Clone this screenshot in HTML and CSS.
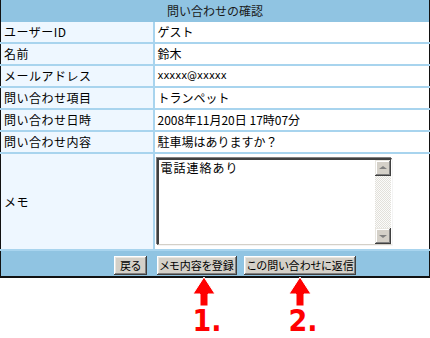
FILE: index.html
```html
<!DOCTYPE html>
<html lang="ja">
<head>
    <meta charset="UTF-8">
    <title>問い合わせの確認</title>
    <link rel="stylesheet" href="styles.css">
</head>
<body>
    <div class="page">
        <table class="confirm">
            <colgroup>
                <col class="col-label">
                <col class="col-value">
            </colgroup>
            <tr>
                <th colspan="2" class="title">問い合わせの確認</th>
            </tr>
            <tr>
                <td class="label">ユーザーID</td>
                <td class="value">ゲスト</td>
            </tr>
            <tr>
                <td class="label">名前</td>
                <td class="value">鈴木</td>
            </tr>
            <tr>
                <td class="label">メールアドレス</td>
                <td class="value mail">xxxxx@xxxxx</td>
            </tr>
            <tr>
                <td class="label">問い合わせ項目</td>
                <td class="value">トランペット</td>
            </tr>
            <tr>
                <td class="label">問い合わせ日時</td>
                <td class="value">2008年11月20日 17時07分</td>
            </tr>
            <tr>
                <td class="label">問い合わせ内容</td>
                <td class="value">駐車場はありますか？</td>
            </tr>
            <tr class="memo-row">
                <td class="label">メモ</td>
                <td class="value">
                    <div class="memo">
                        <textarea class="memo-text">電話連絡あり</textarea>
                        <div class="scrollbar">
                            <span class="scroll-btn up"></span>
                            <span class="scroll-track"></span>
                            <span class="scroll-btn down"></span>
                        </div>
                    </div>
                </td>
            </tr>
            <tr>
                <td colspan="2" class="actions">
                    <button type="button" class="btn back">戻る</button>
                    <button type="button" class="btn save">メモ内容を登録</button>
                    <button type="button" class="btn reply">この問い合わせに返信</button>
                </td>
            </tr>
        </table>

        <div class="callout step1">
            <svg width="24" height="30" viewBox="0 0 24 30">
                <path d="M12 1 L23 18 L16 18 L16 30 L8 30 L8 18 L1 18 Z" fill="#ff0000" stroke="#ffffff" stroke-width="1"/>
            </svg>
            <span class="step-num">1.</span>
        </div>
        <div class="callout step2">
            <svg width="24" height="30" viewBox="0 0 24 30">
                <path d="M12 1 L23 18 L16 18 L16 30 L8 30 L8 18 L1 18 Z" fill="#ff0000" stroke="#ffffff" stroke-width="1"/>
            </svg>
            <span class="step-num">2.</span>
        </div>
    </div>
</body>
</html>
```

FILE: styles.css
```css
body {
    margin: 0;
    background-color: #fff;
    font-family: "Noto Sans CJK JP", "DejaVu Sans", sans-serif;
    font-size: 12px;
    color: #000;
}
.page {
    position: relative;
    width: 430px;
    height: 338px;
}
.confirm {
    width: 430px;
    border-collapse: collapse;
    border-left: 1px solid #111;
    border-right: 1px solid #111;
    border-bottom: 2px solid #111;
    table-layout: fixed;
}
.col-label {
    width: 153px;
}
.confirm td, .confirm th {
    padding: 0;
    line-height: 20px;
}
.title {
    height: 22px;
    background-color: #90c4e2;
    font-weight: normal;
    text-align: center;
    color: #1a1a1a;
}
.label {
    height: 20px;
    padding-left: 3px !important;
    background-color: #eef7ff;
    border-right: 2px solid #a8d4ee;
    border-bottom: 2px solid #a8d4ee;
    letter-spacing: 0.5px;
}
.value {
    height: 20px;
    padding-left: 3px !important;
    background-color: #fff;
    border-bottom: 2px solid #a8d4ee;
}
.mail {
    font-family: "DejaVu Sans", sans-serif;
    font-size: 10px;
}
.memo-row .label, .memo-row .value {
    height: 95px;
    vertical-align: middle;
}
.memo-row .value {
    padding: 0 0 0 2px !important;
}
.memo {
    display: flex;
    width: 232px;
    height: 84px;
    border-top: 2px solid #404040;
    border-left: 2px solid #404040;
    border-right: 1px solid #fff;
    border-bottom: 1px solid #d4d0c8;
    box-shadow: -1px -1px 0 #808080, 1px 1px 0 #f4f4f4;
    background-color: #fff;
}
.memo-text {
    flex: 1;
    border: none;
    margin: 0;
    padding: 1px 2px;
    resize: none;
    outline: none;
    font-family: "Noto Sans CJK JP", sans-serif;
    font-size: 12px;
    letter-spacing: 1px;
    line-height: 14px;
    background: transparent;
}
.scrollbar {
    display: flex;
    flex-direction: column;
    width: 16px;
}
.scroll-track {
    flex: 1;
    background: repeating-conic-gradient(#e2e0da 0 25%, #fbfbfa 0 50%) 0 0 / 2px 2px;
}
.scroll-btn {
    position: relative;
    height: 16px;
    background-color: #d4d0c8;
    box-shadow: inset -1px -1px #404040, inset 1px 1px #e8e6e0, inset -2px -2px #808080, inset 2px 2px #fff;
}
.scroll-btn::after {
    content: "";
    position: absolute;
    left: 4px;
    width: 0;
    height: 0;
    border-left: 4px solid transparent;
    border-right: 4px solid transparent;
}
.scroll-btn.up::after {
    top: 6px;
    border-bottom: 3px solid #808080;
}
.scroll-btn.down::after {
    top: 7px;
    border-top: 3px solid #808080;
}
.actions {
    height: 25px;
    background-color: #90c4e2;
    padding-left: 113px !important;
    white-space: nowrap;
}
.btn {
    height: 19px;
    margin: 3px 0 0 0;
    padding: 0;
    border: none;
    background-color: #d4d0c8;
    font-family: "Noto Sans CJK JP", sans-serif;
    font-size: 11px;
    font-feature-settings: "palt";
    line-height: 19px;
    color: #000;
    vertical-align: top;
    box-shadow: inset -1px -1px #404040, inset 1px 1px #fff, inset -2px -2px #808080, inset 2px 2px #e8e6e0;
}
.back {
    width: 33px;
}
.save {
    width: 80px;
    margin-left: 7px;
}
.reply {
    width: 112px;
    margin-left: 5px;
}
.callout {
    position: absolute;
    top: 276px;
    display: flex;
    flex-direction: column;
    align-items: center;
    width: 30px;
}
.step1 {
    left: 189px;
}
.step2 {
    left: 285px;
}
.step-num {
    font-family: "Liberation Sans Narrow", "DejaVu Sans Condensed", sans-serif;
    font-weight: bold;
    font-size: 30px;
    line-height: 30px;
    color: #ff0000;
    padding-left: 6px;
}
```
